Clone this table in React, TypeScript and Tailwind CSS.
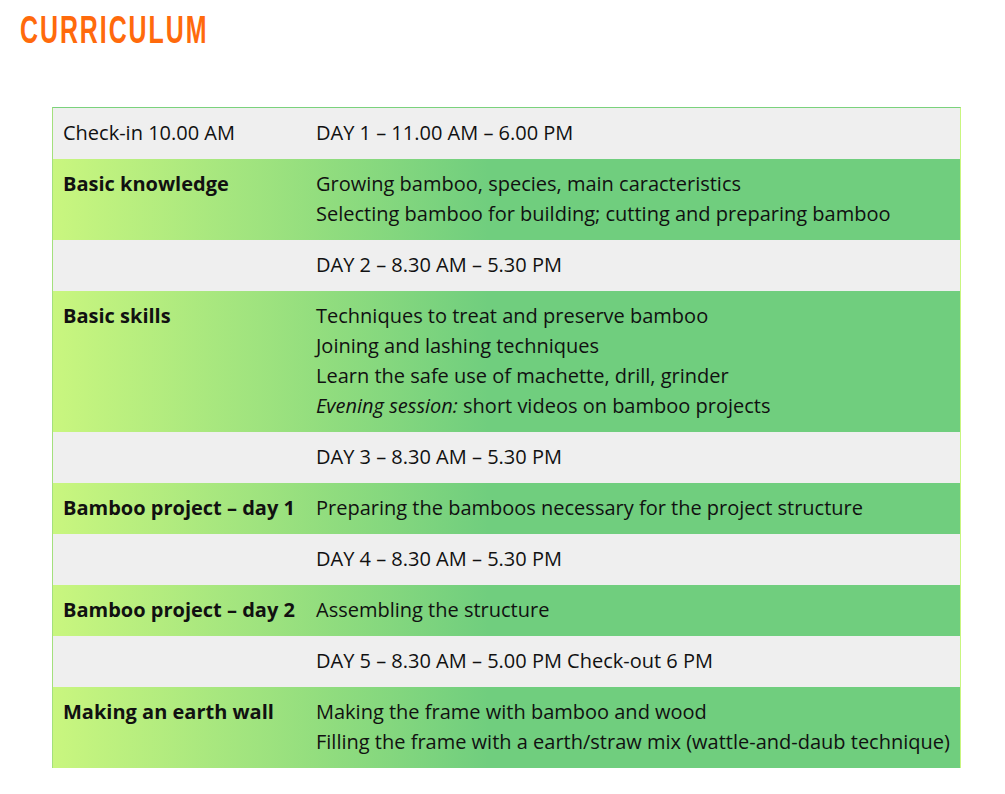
export default function App() {
  const rows: { label?: string; lines: React.ReactNode[]; green: boolean; first?: string }[] = [
    { first: "Check-in 10.00 AM", lines: ["DAY 1 – 11.00 AM – 6.00 PM"], green: false },
    {
      label: "Basic knowledge",
      lines: [
        "Growing bamboo, species, main caracteristics",
        "Selecting bamboo for building; cutting and preparing bamboo",
      ],
      green: true,
    },
    { lines: ["DAY 2 – 8.30 AM – 5.30 PM"], green: false },
    {
      label: "Basic skills",
      lines: [
        "Techniques to treat and preserve bamboo",
        "Joining and lashing techniques",
        "Learn the safe use of machette, drill, grinder",
        <>
          <em>Evening session:</em> short videos on bamboo projects
        </>,
      ],
      green: true,
    },
    { lines: ["DAY 3 – 8.30 AM – 5.30 PM"], green: false },
    {
      label: "Bamboo project – day 1",
      lines: ["Preparing the bamboos necessary for the project structure"],
      green: true,
    },
    { lines: ["DAY 4 – 8.30 AM – 5.30 PM"], green: false },
    { label: "Bamboo project – day 2", lines: ["Assembling the structure"], green: true },
    { lines: ["DAY 5 – 8.30 AM – 5.00 PM Check-out 6 PM"], green: false },
    {
      label: "Making an earth wall",
      lines: [
        "Making the frame with bamboo and wood",
        "Filling the frame with a earth/straw mix (wattle-and-daub technique)",
      ],
      green: true,
    },
  ];

  return (
    <div className="min-h-screen bg-white font-['Open_Sans',sans-serif] text-[#111]">
      <h1 className="pl-[20px] pt-[9px] font-['Liberation_Sans',sans-serif] text-[39px] font-bold leading-[42px] text-[#ff6a0c]">
        <span className="inline-block origin-left scale-x-[0.64] tracking-[3px]">CURRICULUM</span>
      </h1>

      <div className="ml-[52px] mt-[56px] w-[909px] border-t border-l border-r border-t-[#7ad27c] border-l-[#a3e07c] border-r-[#c9f67f]">
        {rows.map((row, i) => (
          <div
            key={i}
            className={
              row.green
                ? "flex bg-[linear-gradient(to_right,#c9f67f_0%,#70ce7e_48%,#70ce7e_100%)] pt-[10px] pb-[11px] text-[20px] leading-[30px]"
                : "flex bg-[#efefef] pt-[10px] pb-[11px] text-[20px] leading-[30px]"
            }
          >
            <div className="w-[253px] shrink-0 pl-[10px] font-bold">
              {row.first ? <span className="font-normal">{row.first}</span> : row.label}
            </div>
            <div className="pl-[10px]">
              {row.lines.map((l, j) => (
                <div key={j}>{l}</div>
              ))}
            </div>
          </div>
        ))}
      </div>
    </div>
  );
}
